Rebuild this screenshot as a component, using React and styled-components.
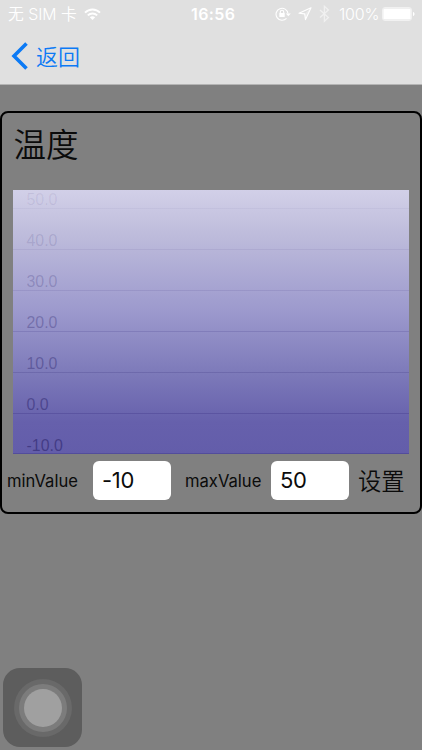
import React from "react";
import styled, { createGlobalStyle } from "styled-components";

const GlobalStyle = createGlobalStyle`
  * { box-sizing: border-box; }
  body { margin: 0; background: #808080; }
`;

const Screen = styled.div`
  width: 422px;
  height: 750px;
  display: flex;
  flex-direction: column;
  overflow: hidden;
  background: #808080;
  color: #0b0b0b;
  font-family: Inter, "Noto Sans CJK SC", sans-serif;
`;

const Header = styled.header`
  flex: none;
  height: 85px;
  background: #e0e0e0;
  border-bottom: 1px solid #b4b4b4;
`;

const StatusBar = styled.div`
  height: 28px;
  display: grid;
  grid-template-columns: 183px auto 1fr;
  align-items: center;
  padding: 0 7px 0 8px;
  color: #fff;
  font-size: 16px;
  line-height: 28px;
  white-space: nowrap;
`;

const StatusGroup = styled.div`
  display: flex;
  align-items: center;
  justify-content: ${(p) => (p.$end ? "flex-end" : "flex-start")};
  height: 28px;
`;

const Carrier = styled.span`
  width: 69px;
  margin-right: 7px;
  padding-top: 1px;
  font-weight: 350;
  font-size: 15.8px;
`;

const Clock = styled.span`
  font-weight: 600;
  font-size: 16px;
  letter-spacing: 0.4px;
`;

const Percent = styled.span`
  width: 40px;
  margin: 0 3px 0 9px;
  font-weight: 350;
  font-size: 16px;
  letter-spacing: -0.2px;
`;

const Glyph = styled.svg`
  display: block;
  flex: none;
  margin-left: ${(p) => p.$gap || 0}px;
`;

const BackButton = styled.button`
  display: flex;
  align-items: center;
  gap: 8px;
  height: 56px;
  padding: 0 0 0 11px;
  border: 0;
  background: none;
  color: #0c7af5;
  font-family: "Noto Sans CJK SC", sans-serif;
  font-size: 22px;
  font-weight: 350;
`;

const BackText = styled.span`
  padding-bottom: 3px;
`;

const Card = styled.section`
  flex: none;
  height: 403px;
  margin-top: 26px;
  padding: 0 11.5px 0 11.5px;
  border: 2px solid #000;
  border-radius: 8px;
`;

const Title = styled.h1`
  margin: 0;
  height: 77px;
  padding: 6px 0 0 0;
  font-family: "Noto Sans CJK SC", sans-serif;
  font-size: 32.5px;
  line-height: 48px;
  font-weight: 350;
`;

const Chart = styled.div`
  display: flex;
  flex-direction: column;
  height: 264px;
  margin-left: -0.5px;
  background: linear-gradient(#d2d0e8 0%, #bfbddc 16%, #9c99cd 46%, #7c79b9 70%, #6660ac 88%, #635daa 100%);
`;

const ChartRow = styled.div`
  flex: none;
  height: ${(p) => (p.$first ? 19 : 41)}px;
  display: flex;
  align-items: flex-end;
  padding-left: 13.5px;
  border-bottom: 1px solid rgba(50, 42, 125, ${(p) => p.$strength * 0.5});
  color: rgba(48, 40, 112, ${(p) => p.$strength});
  font-family: "Liberation Sans", Arial, sans-serif;
  font-size: 15.9px;
  line-height: 16px;
  &:last-child { height: 40px; line-height: 15px; }
`;

const Controls = styled.div`
  display: flex;
  align-items: center;
  height: 39px;
  margin: 7px -11.5px 0;
  padding-left: 5px;
`;

const FieldLabel = styled.label`
  width: ${(p) => p.$width}px;
  padding-top: 1px;
  font-size: 16.6px;
`;

const Field = styled.input`
  width: 78px;
  height: 39px;
  margin-right: ${(p) => p.$after}px;
  padding: 0 9px 2px;
  border: 0;
  border-radius: 6px;
  background: #fff;
  color: #0b0b0b;
  font-family: Inter, sans-serif;
  font-size: 22px;
  letter-spacing: -0.3px;
  outline: none;
`;

const SetButton = styled.button`
  padding: 0 0 1px;
  border: 0;
  background: none;
  color: #0b0b0b;
  font-family: "Noto Sans CJK SC", sans-serif;
  font-size: 23.3px;
  font-weight: 350;
`;

const AssistiveTouch = styled.button`
  display: grid;
  place-items: center;
  flex: none;
  width: 79px;
  height: 79px;
  margin: auto 0 3px 3px;
  padding: 0;
  border: 0;
  border-radius: 17px;
  background: #5d5d5d;
`;

const OuterRing = styled.span`
  display: grid;
  place-items: center;
  width: 58px;
  height: 58px;
  border-radius: 50%;
  background: #696969;
`;

const InnerRing = styled.span`
  display: grid;
  place-items: center;
  width: 48px;
  height: 48px;
  border-radius: 50%;
  background: #7c7c7c;
`;

const Core = styled.span`
  width: 38px;
  height: 38px;
  border-radius: 50%;
  background: #a0a0a0;
`;

const rows = [
  ["50.0", 0.09],
  ["40.0", 0.15],
  ["30.0", 0.23],
  ["20.0", 0.34],
  ["10.0", 0.42],
  ["0.0", 0.54],
  ["-10.0", 0.64],
];

function WifiIcon() {
  return (
    <Glyph width="17" height="13" viewBox="0 0 17 13" fill="none" stroke="#fff" strokeWidth="1.9">
      <path d="M1 4.7C5.2.4 11.8.4 16 4.7M3.8 7.4c2.7-2.6 6.7-2.6 9.4 0" />
      <path d="M8.5 12 5.8 9.3c1.6-1.4 3.8-1.4 5.4 0z" fill="#fff" stroke="none" />
    </Glyph>
  );
}

function RotationLockIcon() {
  return (
    <Glyph width="16" height="15" viewBox="0 0 16 15" fill="none" stroke="#fff" strokeWidth="1.1">
      <path d="M11.5 11.3A6 6 0 1 1 13 6.5" />
      <path d="M10.8 6.5h5L13.3 9.3z" fill="#fff" stroke="none" />
      <path d="M5.3 6.5V5a1.7 1.7 0 0 1 3.4 0v1.5" />
      <rect x="4.3" y="6" width="5.4" height="4" rx=".5" fill="#fff" stroke="none" />
    </Glyph>
  );
}

function LocationIcon() {
  return (
    <Glyph $gap={7} width="14" height="14" viewBox="0 0 14 14" fill="none" stroke="#fff" strokeWidth="1.1">
      <path d="M13 .8 1 6.2l5.7.7.8 5.7z" strokeLinejoin="round" />
      <path d="M13 .8 6.7 6.9l.8 5.7z" fill="#fff" fillOpacity=".3" stroke="none" />
    </Glyph>
  );
}

function BluetoothIcon() {
  return (
    <Glyph $gap={7} width="11" height="18" viewBox="0 0 11 18" fill="none" stroke="#f0f0f0" strokeWidth="1.3">
      <path d="m1 5 8.4 7.6-4 3.7V1.3l4 3.7L1 12.6" />
    </Glyph>
  );
}

function BatteryIcon() {
  return (
    <Glyph width="33" height="14" viewBox="0 0 33 14" fill="#fff">
      <rect x=".5" y=".5" width="29" height="13" rx="2.5" fill="none" stroke="#fff" strokeOpacity=".55" />
      <rect x="1.3" y="1.5" width="27.4" height="11" rx="1.3" />
      <path d="M31 5c2 .5 2 3.5 0 4z" />
    </Glyph>
  );
}

export default function App() {
  return (
    <Screen>
      <GlobalStyle />
      <Header>
        <StatusBar>
          <StatusGroup>
            <Carrier>无 SIM 卡</Carrier>
            <WifiIcon />
          </StatusGroup>
          <Clock>16:56</Clock>
          <StatusGroup $end>
            <RotationLockIcon />
            <LocationIcon />
            <BluetoothIcon />
            <Percent>100%</Percent>
            <BatteryIcon />
          </StatusGroup>
        </StatusBar>
        <BackButton>
          <Glyph width="17" height="28" viewBox="0 0 17 28" fill="none" stroke="#0c7af5" strokeWidth="3.6">
            <path d="M15.5 1.5 3 14l12.5 12.5" />
          </Glyph>
          <BackText>返回</BackText>
        </BackButton>
      </Header>
      <Card>
        <Title>温度</Title>
        <Chart>
          {rows.map(([label, strength], i) => (
            <ChartRow key={label} $first={i === 0} $strength={strength}>
              {label}
            </ChartRow>
          ))}
        </Chart>
        <Controls>
          <FieldLabel htmlFor="min" $width={86}>minValue</FieldLabel>
          <Field id="min" defaultValue="-10" $after={14} />
          <FieldLabel htmlFor="max" $width={86}>maxValue</FieldLabel>
          <Field id="max" defaultValue="50" $after={9} />
          <SetButton>设置</SetButton>
        </Controls>
      </Card>
      <AssistiveTouch aria-label="AssistiveTouch">
        <OuterRing>
          <InnerRing>
            <Core />
          </InnerRing>
        </OuterRing>
      </AssistiveTouch>
    </Screen>
  );
}
